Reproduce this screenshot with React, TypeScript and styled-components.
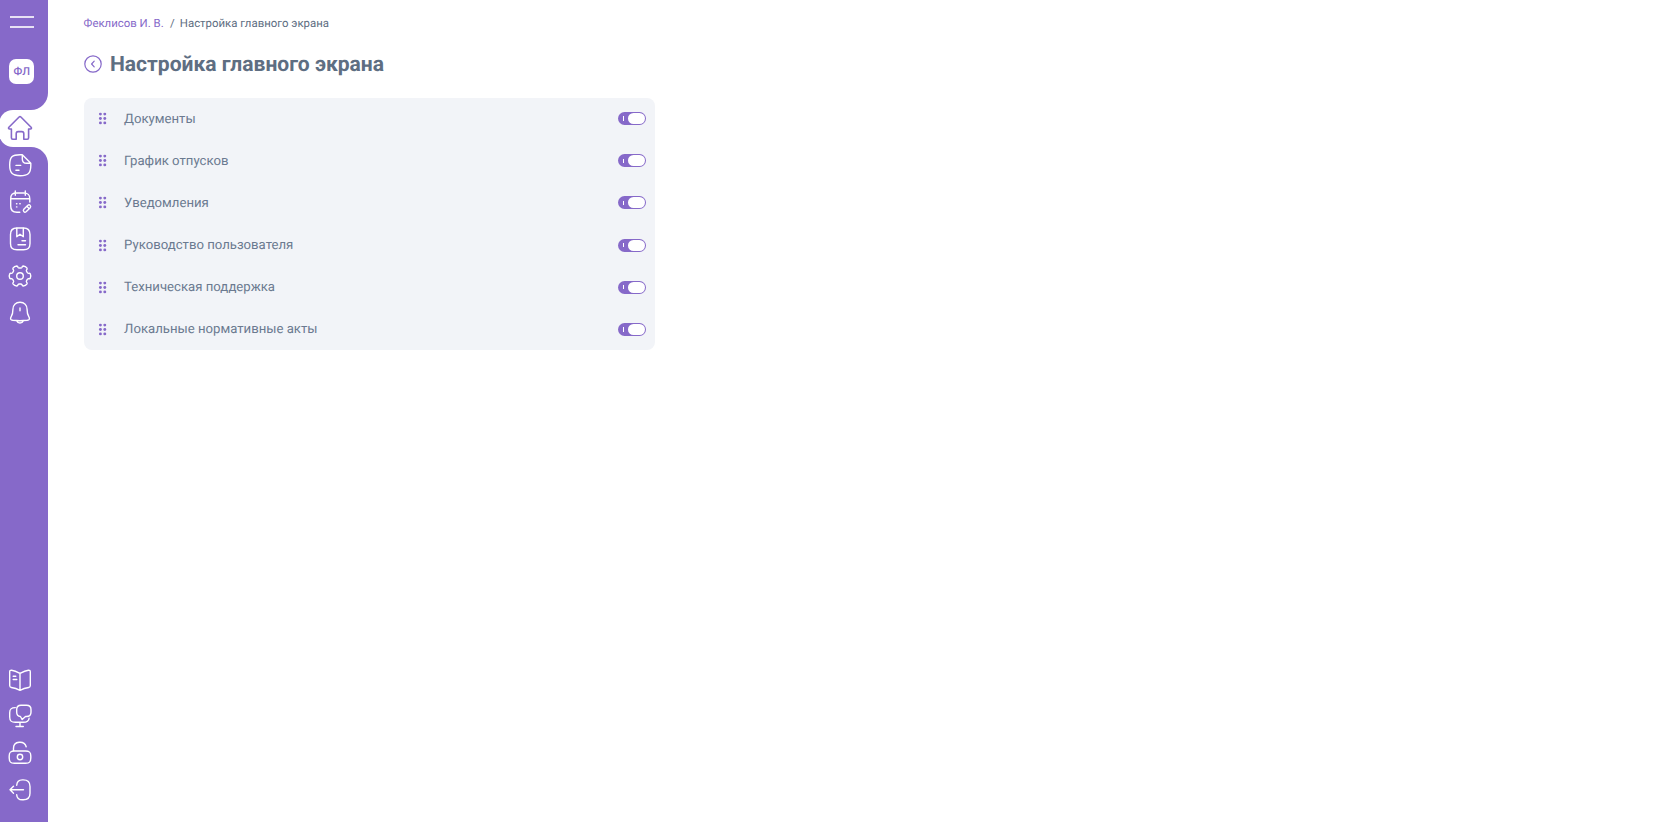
import React, { useState } from 'react';
import styled, { createGlobalStyle } from 'styled-components';

const GlobalStyle = createGlobalStyle`
  :root {
    --accent: #8669c9;
    --text: #6b7a90;
    --text-dark: #5e6e82;
    --panel: #f2f4f8;
  }

  body {
    margin: 0;
    background: #fff;
    font-family: Roboto, 'Liberation Sans', sans-serif;
    text-rendering: geometricPrecision;
    color: var(--text);
  }
`;

const Page = styled.div`
  display: flex;
  height: 100vh;
  overflow: hidden;
`;

const Sidebar = styled.aside`
  width: 48.4px;
  flex: none;
  display: flex;
  flex-direction: column;
`;

const SidebarTop = styled.div`
  height: 109.8px;
  flex: none;
  box-sizing: border-box;
  padding: 16.4px 0 0 9.4px;
  background: var(--accent);
  border-bottom-right-radius: 17px;
`;

const MenuButton = styled.button`
  display: block;
  width: 24px;
  height: 12px;
  box-sizing: border-box;
  margin: 0 0 30.6px 0.6px;
  padding: 0;
  border: 0;
  border-top: 2px solid rgba(255, 255, 255, 0.8);
  border-bottom: 2px solid rgba(255, 255, 255, 0.8);
  background: none;
`;

const Avatar = styled.div`
  display: flex;
  align-items: center;
  justify-content: center;
  width: 25px;
  height: 25px;
  border-radius: 7px;
  background: #fff;
  color: var(--accent);
  font-size: 11px;
  font-weight: 500;
`;

const ActiveTab = styled.div`
  height: 36.8px;
  flex: none;
  overflow: hidden;
  background: linear-gradient(to right, var(--accent) 18px, #fff 18px);
`;

const ActiveItem = styled.a`
  display: flex;
  align-items: center;
  height: 100%;
  margin-left: -1px;
  padding-left: 9.3px;
  border-radius: 14px 0 0 14px;
  background: #fff;
  color: var(--accent);
`;

const SidebarBody = styled.div`
  flex: 1;
  display: flex;
  flex-direction: column;
  justify-content: space-between;
  padding-bottom: 13.3px;
  background: var(--accent);
  border-top-right-radius: 17px;
`;

const NavList = styled.nav`
  display: flex;
  flex-direction: column;
`;

const NavItem = styled.a`
  display: flex;
  align-items: center;
  height: 36.9px;
  padding-left: 8.2px;
  color: #fff;
`;

const Icon = styled.svg<{ $weight?: number }>`
  width: 24px;
  height: 24px;
  fill: none;
  stroke: currentColor;
  stroke-width: ${({ $weight = 1.4 }) => $weight};
  stroke-linecap: round;
  stroke-linejoin: round;
  overflow: visible;
`;

const Main = styled.main`
  padding: 15px 0 0 35.2px;
`;

const Breadcrumbs = styled.div`
  display: flex;
  height: 15px;
  line-height: 16px;
  font-size: 11.41px;
  color: var(--text-dark);
`;

const Crumb = styled.a`
  color: var(--accent);
`;

const Separator = styled.span`
  margin: 0 5px 0 6.4px;
`;

const TitleRow = styled.div`
  display: flex;
  align-items: center;
  gap: 8px;
  height: 28px;
  margin: 20px 0 19.6px;
`;

const BackIcon = styled(Icon)`
  width: 18px;
  height: 18px;
  margin-left: 0.4px;
  color: var(--accent);
`;

const Title = styled.h1`
  margin: 0;
  padding-top: 2px;
  font-size: 21.07px;
  font-weight: 700;
  line-height: 28px;
  color: var(--text-dark);
`;

const Panel = styled.ul`
  width: 571px;
  box-sizing: border-box;
  margin: 0;
  padding: 0;
  list-style: none;
  border-radius: 8px;
  background: var(--panel);
`;

const Row = styled.li`
  display: flex;
  align-items: center;
  height: 42.15px;
  padding: 0 8.5px 0 14.6px;
`;

const Handle = styled.svg`
  width: 9px;
  height: 13px;
  fill: var(--accent);
`;

const Label = styled.span`
  flex: 1;
  margin: 1.9px 0 0 16.9px;
  font-size: 13.17px;
  line-height: 18px;
`;

const Switch = styled.button<{ $on: boolean }>`
  display: flex;
  align-items: center;
  justify-content: space-between;
  flex-direction: ${({ $on }) => ($on ? 'row' : 'row-reverse')};
  width: 28.4px;
  height: 13px;
  box-sizing: border-box;
  padding: ${({ $on }) => ($on ? '0 1px 0 5.6px' : '0 5.6px 0 1px')};
  border: 0;
  border-radius: 7px;
  background: ${({ $on }) => ($on ? 'var(--accent)' : '#b9bfcc')};
`;

const SwitchMark = styled.span`
  width: 1px;
  height: 4.5px;
  background: #fff;
`;

const Knob = styled.span`
  width: 16.8px;
  height: 11px;
  border-radius: 5.5px;
  background: #fff;
`;

const HomeIcon = () => (
  <Icon viewBox="0 0 24 24" $weight={1.6}>
    <path d="M11.1 1 .9 11.2c-.8.9-.3 1.8.7 1.8h1.8v8.8c0 1 .5 1.5 1.4 1.5h3.4v-5.6c0-1.4.8-2.1 2-2.1h3.6c1.2 0 2 .7 2 2.1v5.6h3.4c.9 0 1.4-.5 1.4-1.5V13h1.8c1 0 1.5-.9.7-1.8L12.9 1c-.6-.5-1.2-.5-1.8 0Z" />
  </Icon>
);

const DocumentIcon = () => (
  <Icon viewBox="0 0 24 24">
    <path d="M14.3 1.7H12C4.2 1.7 1.7 4 1.7 12S4.2 22.7 12.2 22.7 22.8 20 22.8 12.5v-2.3L14.3 1.7v4.2c0 3.2 1.2 4.3 4.3 4.3h4.2M8 12.4h4.7M7.9 17.3H11" />
  </Icon>
);

const CalendarIcon = () => (
  <Icon viewBox="0 0 24 24">
    <path d="M7.3 1v4.2M17.3 1v4.2M11.8 22.3H9c-4.6 0-6.3-1.8-6.3-6.4V9c0-4.6 1.7-6 6.3-6h6.5c4.6 0 6.3 1.4 6.3 6v3M2.9 8.8h18.7" />
    <path d="M15.8 19.2 19.9 15.3c1.7-1.3 3.6.7 2.3 2.4l-4.1 4.1c-1.7 1.3-3.6-.9-2.3-2.6Z" />
    <path d="M19.1 16.6l1.7 1.7M8.5 13.7h.4M11.8 13.7h.4M8.5 16.9h.4" />
  </Icon>
);

const RegulationsIcon = () => (
  <Icon viewBox="0 0 24 24">
    <path d="M9 1h6.5C20.2 1 22 3 22 7.5v9c0 4.6-1.8 6.2-6.5 6.2H9c-4.7 0-6.5-1.6-6.5-6.2v-9C2.5 3 4.3 1 9 1Z" />
    <path d="M8.8 1.2v8.5L12 7.2l3.3 2.5V1.2M14 13.7h3.5M10 17.8h7.5" />
  </Icon>
);

// Six rounded teeth, notch at the top and at the bottom
const gearPath = () => {
  const point = (radius: number, degrees: number) => {
    const a = (degrees * Math.PI) / 180;
    return `${(12 + radius * Math.cos(a)).toFixed(2)} ${(12 + radius * Math.sin(a)).toFixed(2)}`;
  };
  let d = `M${point(10.5, -12)}`;
  for (let a = 0; a < 360; a += 60) {
    d += `Q${point(11.3, a)} ${point(10.5, a + 12)}`;
    d += `Q${point(10.2, a + 17)} ${point(9, a + 17)}`;
    d += `Q${point(8, a + 18)} ${point(8, a + 30)}`;
    d += `Q${point(8, a + 42)} ${point(9, a + 43)}`;
    d += `Q${point(10.2, a + 43)} ${point(10.5, a + 48)}`;
  }
  return `${d}Z`;
};

const SettingsIcon = () => (
  <Icon viewBox="0 0 24 24">
    <path d={gearPath()} />
    <circle cx="12" cy="12" r="3.3" />
  </Icon>
);

const BellIcon = () => (
  <Icon viewBox="0 0 24 24">
    <path d="M12 1.2c-4.3 0-7 3-7.1 7.2 0 3.6-.4 5.2-1.7 7.3-1.3 2.2-.6 3.3 1.6 3.6 4.6.5 9.8.5 14.4 0 2.2-.3 2.9-1.4 1.6-3.6-1.3-2.1-1.7-3.7-1.7-7.3C19 4.2 16.3 1.2 12 1.2ZM8.8 20c1 2.6 5.4 2.6 6.4 0M12 7v2.8" />
  </Icon>
);

const GuideIcon = () => (
  <Icon viewBox="0 0 24 24">
    <path d="M12 5.3v17M12 5.3C9.5 4 6.5 2.6 3.6 2.2 2.3 2.1 1.7 2.7 1.7 4v13.5c0 1.2.5 1.8 1.7 2 3 .5 6 1.5 8.6 2.8 2.6-1.3 5.6-2.3 8.6-2.8 1.2-.2 1.7-.8 1.7-2V4c0-1.3-.6-1.9-1.9-1.8C17.5 2.6 14.5 4 12 5.3ZM5.2 8.3h2.6M5.2 11.5h3.6" />
  </Icon>
);

const SupportIcon = () => (
  <Icon viewBox="0 0 24 24">
    <path d="M7.3 3.6C3.2 3.6 1.7 5.1 1.7 8.8v4.3c0 4 1.5 5.2 5.6 5.2h8c3.9 0 5.5-1 5.8-4.1M12 18.3v4.2M8 22.5h7.3" />
    <path d="M13 1.2h5.5c3.2 0 4.5 1.3 4.5 4.3v2.7c0 3-1.3 4.3-4.5 4.3h-1L14.2 15.6l-1.8-3.1c-2.7-.2-3.7-1.5-3.7-4.3V5.5c0-3 1.1-4.3 4.3-4.3Z" />
  </Icon>
);

const UnlockIcon = () => (
  <Icon viewBox="0 0 24 24">
    <path d="M6.5 10h11c4 0 5.3 1.3 5.3 5v2c0 4-1.3 5.3-5.3 5.3h-11c-4 0-5.3-1.3-5.3-5.3v-2c0-3.7 1.3-5 5.3-5ZM5.5 9.7V7.2c0-7.3 10.8-8 12.7-1.4" />
    <circle cx="12" cy="16" r="2.7" />
  </Icon>
);

const LogoutIcon = () => (
  <Icon viewBox="0 0 24 24">
    <path d="M8.7 7.3c.2-3.6 2-5.4 5.6-5.4h1c4.5 0 6.7 2.2 6.7 6.6v6.8c0 4.4-2.2 6.5-6.7 6.5h-1c-3.6 0-5.4-1.7-5.6-5.1M15.5 11.8H2.2M5.5 8.2 2 11.8l3.5 3.5" />
  </Icon>
);

const navIcons = [
  DocumentIcon,
  CalendarIcon,
  RegulationsIcon,
  SettingsIcon,
  BellIcon,
];

const footerIcons = [GuideIcon, SupportIcon, UnlockIcon, LogoutIcon];

const sections = [
  'Документы',
  'График отпусков',
  'Уведомления',
  'Руководство пользователя',
  'Техническая поддержка',
  'Локальные нормативные акты',
];

const DragHandle = () => (
  <Handle viewBox="0 0 9 13">
    {[2.4, 6.8].map((x) =>
      [2.1, 6.5, 10.9].map((y) => (
        <circle key={`${x}-${y}`} cx={x} cy={y} r="1.45" />
      ))
    )}
  </Handle>
);

const SectionRow = ({ label }: { label: string }) => {
  const [on, setOn] = useState(true);

  return (
    <Row>
      <DragHandle />
      <Label>{label}</Label>
      <Switch
        $on={on}
        role="switch"
        aria-checked={on}
        onClick={() => setOn(!on)}
      >
        <SwitchMark />
        <Knob />
      </Switch>
    </Row>
  );
};

const App = () => {
  return (
    <Page>
      <GlobalStyle />
      <Sidebar>
        <SidebarTop>
          <MenuButton />
          <Avatar>ФЛ</Avatar>
        </SidebarTop>
        <ActiveTab>
          <ActiveItem>
            <HomeIcon />
          </ActiveItem>
        </ActiveTab>
        <SidebarBody>
          <NavList>
            {navIcons.map((NavIcon, i) => (
              <NavItem key={i}>
                <NavIcon />
              </NavItem>
            ))}
          </NavList>
          <NavList>
            {footerIcons.map((NavIcon, i) => (
              <NavItem key={i}>
                <NavIcon />
              </NavItem>
            ))}
          </NavList>
        </SidebarBody>
      </Sidebar>
      <Main>
        <Breadcrumbs>
          <Crumb>Феклисов И. В.</Crumb>
          <Separator>/</Separator>
          <span>Настройка главного экрана</span>
        </Breadcrumbs>
        <TitleRow>
          <BackIcon viewBox="0 0 18 18" $weight={1.2}>
            <circle cx="9" cy="9" r="8.2" />
            <path d="M10.2 6.2 7.6 9l2.6 2.8" />
          </BackIcon>
          <Title>Настройка главного экрана</Title>
        </TitleRow>
        <Panel>
          {sections.map((label) => (
            <SectionRow key={label} label={label} />
          ))}
        </Panel>
      </Main>
    </Page>
  );
};

export default App;
